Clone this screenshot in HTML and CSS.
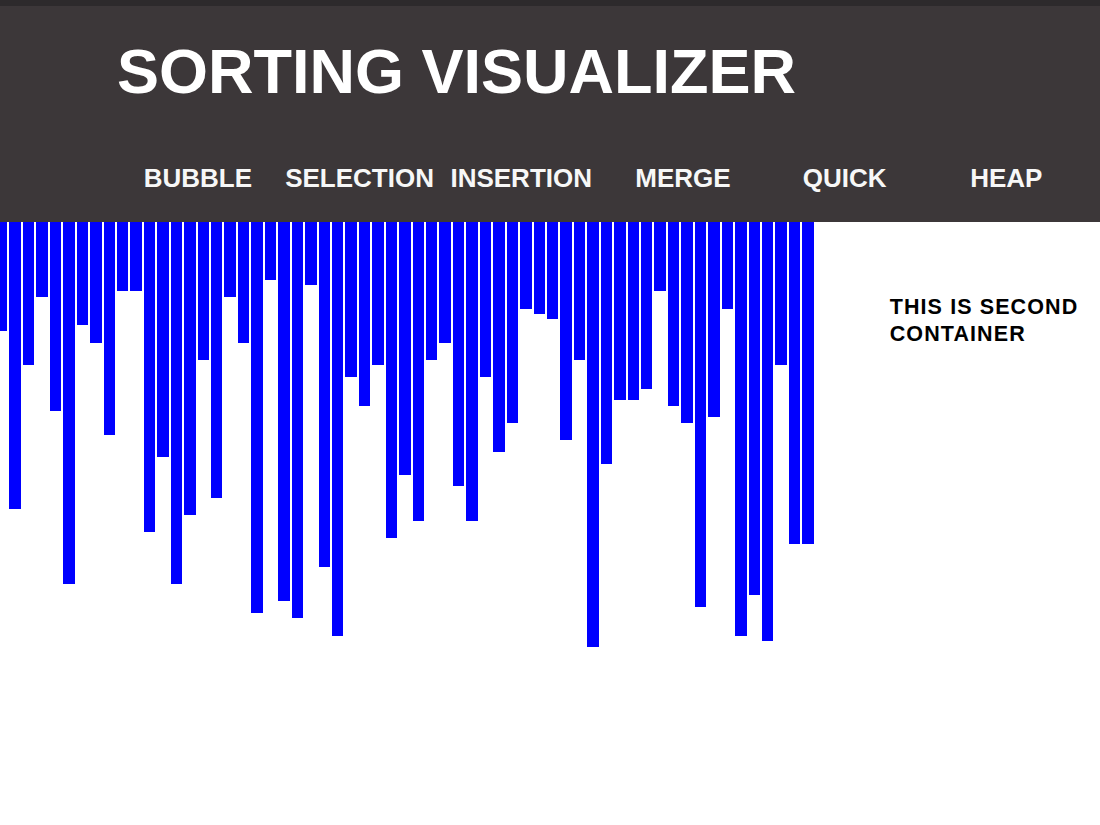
FILE: index.html
```html
<!DOCTYPE html>
<html lang="en">
<head>
<meta charset="utf-8">
<title>Sorting Visualizer</title>
<link rel="stylesheet" href="styles.css">
</head>
<body>
<header class="header">
  <h1 class="title">SORTING VISUALIZER</h1>
  <nav class="nav">
    <a class="nav-item" href="#">BUBBLE</a>
    <a class="nav-item" href="#">SELECTION</a>
    <a class="nav-item" href="#">INSERTION</a>
    <a class="nav-item" href="#">MERGE</a>
    <a class="nav-item" href="#">QUICK</a>
    <a class="nav-item" href="#">HEAP</a>
  </nav>
</header>
<main class="main">
  <div class="bars">
    <div class="bar" style="height:109px"></div>
    <div class="bar" style="height:287px"></div>
    <div class="bar" style="height:143px"></div>
    <div class="bar" style="height:75px"></div>
    <div class="bar" style="height:189px"></div>
    <div class="bar" style="height:362px"></div>
    <div class="bar" style="height:103px"></div>
    <div class="bar" style="height:121px"></div>
    <div class="bar" style="height:213px"></div>
    <div class="bar" style="height:69px"></div>
    <div class="bar" style="height:69px"></div>
    <div class="bar" style="height:310px"></div>
    <div class="bar" style="height:235px"></div>
    <div class="bar" style="height:362px"></div>
    <div class="bar" style="height:293px"></div>
    <div class="bar" style="height:138px"></div>
    <div class="bar" style="height:276px"></div>
    <div class="bar" style="height:75px"></div>
    <div class="bar" style="height:121px"></div>
    <div class="bar" style="height:391px"></div>
    <div class="bar" style="height:58px"></div>
    <div class="bar" style="height:379px"></div>
    <div class="bar" style="height:396px"></div>
    <div class="bar" style="height:63px"></div>
    <div class="bar" style="height:345px"></div>
    <div class="bar" style="height:414px"></div>
    <div class="bar" style="height:155px"></div>
    <div class="bar" style="height:184px"></div>
    <div class="bar" style="height:143px"></div>
    <div class="bar" style="height:316px"></div>
    <div class="bar" style="height:253px"></div>
    <div class="bar" style="height:299px"></div>
    <div class="bar" style="height:138px"></div>
    <div class="bar" style="height:121px"></div>
    <div class="bar" style="height:264px"></div>
    <div class="bar" style="height:299px"></div>
    <div class="bar" style="height:155px"></div>
    <div class="bar" style="height:230px"></div>
    <div class="bar" style="height:201px"></div>
    <div class="bar" style="height:87px"></div>
    <div class="bar" style="height:92px"></div>
    <div class="bar" style="height:97px"></div>
    <div class="bar" style="height:218px"></div>
    <div class="bar" style="height:138px"></div>
    <div class="bar" style="height:425px"></div>
    <div class="bar" style="height:242px"></div>
    <div class="bar" style="height:178px"></div>
    <div class="bar" style="height:178px"></div>
    <div class="bar" style="height:167px"></div>
    <div class="bar" style="height:69px"></div>
    <div class="bar" style="height:184px"></div>
    <div class="bar" style="height:201px"></div>
    <div class="bar" style="height:385px"></div>
    <div class="bar" style="height:195px"></div>
    <div class="bar" style="height:87px"></div>
    <div class="bar" style="height:414px"></div>
    <div class="bar" style="height:373px"></div>
    <div class="bar" style="height:419px"></div>
    <div class="bar" style="height:143px"></div>
    <div class="bar" style="height:322px"></div>
    <div class="bar" style="height:322px"></div>
  </div>
  <div class="second">THIS IS SECOND CONTAINER</div>
</main>
</body>
</html>
```
FILE: styles.css
```css
html, body {
  margin: 0;
  padding: 0;
  background: #ffffff;
  font-family: "Liberation Sans", Arial, sans-serif;
}

.header {
  background: #3c3739;
  border-top: 6px solid #2d2a2c;
  padding: 34px 0 31px 117px;
}

.title {
  margin: 0;
  font-size: 63px;
  line-height: 63px;
  font-weight: 700;
  color: #ffffff;
}

.nav {
  margin-top: 62px;
  display: grid;
  grid-template-columns: repeat(6, 161.7px);
}

.nav-item {
  display: block;
  text-align: center;
  font-size: 26px;
  line-height: 26px;
  font-weight: 700;
  color: #f7f7f7;
  text-decoration: none;
}

.main {
  display: flex;
  align-items: flex-start;
  overflow: hidden;
}

.bars {
  display: flex;
  align-items: flex-start;
  gap: 2px;
  margin-left: -4px;
  flex: 0 0 auto;
}

.bar {
  width: 11.44px;
  background: #0000ff;
}

.second {
  flex: 0 0 205px;
  margin-left: 76px;
  padding-top: 72px;
  font-size: 21.5px;
  line-height: 27px;
  letter-spacing: 1.1px;
  font-weight: 700;
  color: #000000;
}
```
